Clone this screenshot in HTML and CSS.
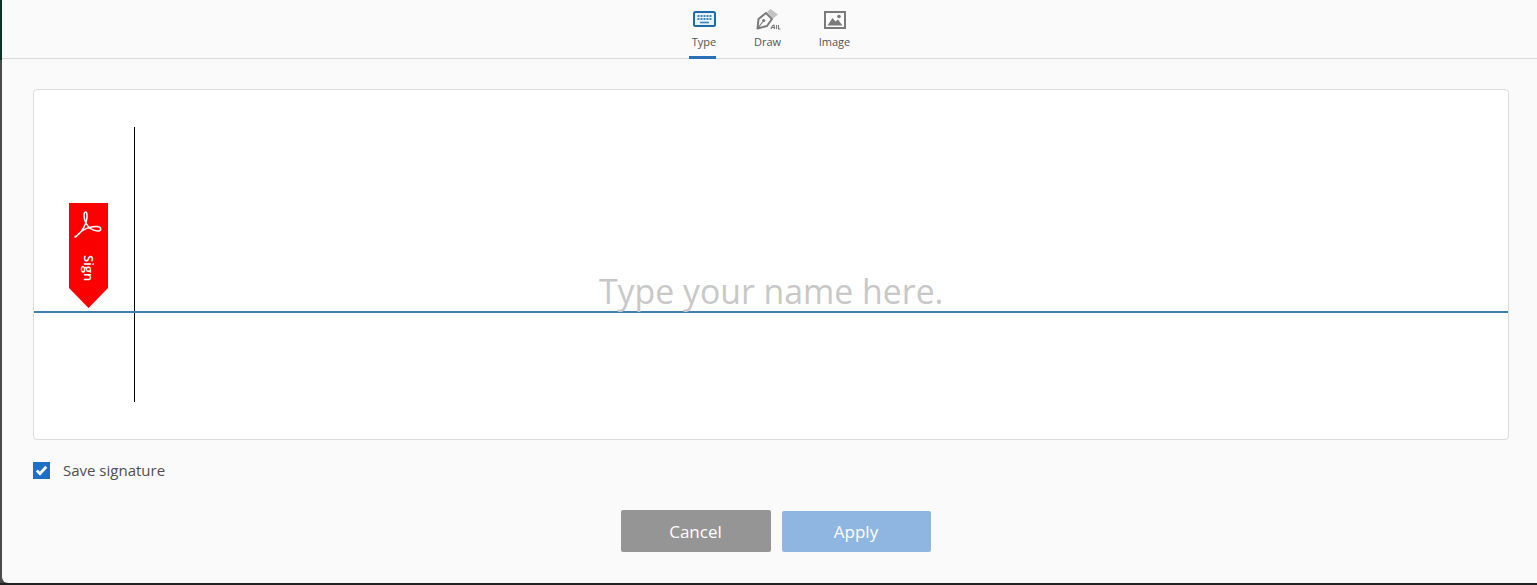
FILE: index.html
```html
<!DOCTYPE html>
<html lang="en">
<head>
<meta charset="utf-8">
<title>Sign</title>
<link rel="stylesheet" href="styles.css">
</head>
<body>
<div class="dialog">
  <nav class="tabs">
    <div class="tab tab-active">
      <svg class="tab-icon tab-icon-type" width="23" height="21" viewBox="0 0 23 21">
        <rect x="1" y="4" width="21" height="14" rx="1.500" fill="#eaf2f8" stroke="#1c6aa8" stroke-width="2"/>
        <path d="M4.500 8h14M4.500 11h14" stroke="#3d86bb" stroke-width="2" stroke-dasharray="2 1" fill="none"/>
        <path d="M7 14.500h9" stroke="#3d86bb" stroke-width="1.600" fill="none"/>
      </svg>
      <span class="tab-label tab-label-type">Type</span>
    </div>
    <div class="tab">
      <svg class="tab-icon" width="25" height="21" viewBox="0 0 25 21" overflow="visible">
        <path d="M2.500 20.500 L3.500 11 L11 5 L17 11 L12 18 Z" fill="none" stroke="#7a7a7a" stroke-width="2" stroke-linejoin="round"/>
        <path d="M2.500 20.500 L8 13.500" stroke="#7a7a7a" stroke-width="1.200"/>
        <circle cx="8.700" cy="12.500" r="1.600" fill="#7a7a7a"/>
        <path d="M12 4 L15.500 1 L23 6.500 L18 10.500 Z" fill="#c2c2c2"/>
        <path d="M16 21 C17 18 18 17 19 17 L19.500 21 M16.500 19.500 H20 M21.500 17 V21 M23.500 17 V21 H25.500" fill="none" stroke="#7a7a7a" stroke-width="1.100"/>
      </svg>
      <span class="tab-label">Draw</span>
    </div>
    <div class="tab">
      <svg class="tab-icon" width="22" height="21" viewBox="0 0 22 21">
        <rect x="1" y="4" width="20" height="16" fill="none" stroke="#7a7a7a" stroke-width="2"/>
        <path d="M3.500 17.500 L8.500 10 L11.500 13.500 L14 11.500 L18.500 17.500 Z" fill="#7a7a7a"/>
        <circle cx="15" cy="8.500" r="1.800" fill="#7a7a7a"/>
      </svg>
      <span class="tab-label">Image</span>
    </div>
  </nav>
  <main class="content">
    <section class="pad">
      <div class="flag">
        <svg class="flag-logo" width="30" height="28" viewBox="0 0 30 28">
          <path d="M2 26 C7 23 11 17 13 11.500 C14.500 7 14.500 1 12.500 1 C10.500 1 10.500 7 13 12 C15 16 19 19.500 24 20 C29 20.500 29 16 24 15.500 C18 15 10 18 6 22.500 C3.500 25.500 2 26.500 2 26 Z" fill="none" stroke="#fff" stroke-width="1.500"/>
        </svg>
        <span class="flag-text">Sign</span>
      </div>
      <div class="cursor-line"></div>
      <div class="baseline"></div>
      <div class="placeholder">Type your name here.</div>
    </section>
    <label class="save">
      <span class="check">
        <svg width="17" height="17" viewBox="0 0 17 17"><path d="M3.800 8.500 L7 11.800 L13.200 4.800" fill="none" stroke="#fff" stroke-width="2.800"/></svg>
      </span>
      <span class="save-text">Save signature</span>
    </label>
    <div class="actions">
      <button class="btn btn-cancel" type="button">Cancel</button>
      <button class="btn btn-apply" type="button">Apply</button>
    </div>
  </main>
</div>
</body>
</html>
```
FILE: styles.css
```css
html, body {
  margin: 0;
  height: 100%;
  overflow: hidden;
}

body {
  padding: 0 0 2px 2px;
  box-sizing: border-box;
  height: 585px;
  background: linear-gradient(to bottom, #12302a 0, #12302a 60px, #4a4a4a 60px, #4a4a4a 583px, #222 583px);
  font-family: "Open Sans", "Noto Sans", sans-serif;
}

.dialog {
  height: 583px;
  background: #fafafa;
  border-bottom-left-radius: 6px;
  display: flex;
  flex-direction: column;
}

.tabs {
  height: 58px;
  border-bottom: 1px solid #d8d8d8;
  display: flex;
  justify-content: center;
  padding-right: 2px;
}

.tab {
  width: 27px;
  height: 59px;
  display: flex;
  flex-direction: column;
  align-items: center;
  box-sizing: border-box;
}

.tab:nth-child(1) { margin-right: 25px; }
.tab:nth-child(2) { margin-left: 13px; margin-right: 26px; }
.tab:nth-child(3) { margin-left: 14px; }

.tab-active {
  border-bottom: 3px solid #2b6fb8;
}

.tab-icon {
  margin-top: 8px;
  flex: none;
}

.tab-icon-type,
.tab-label-type {
  margin-left: 3px;
}

.tab-label {
  margin-top: 5px;
  font-size: 11px;
  line-height: 16px;
  color: #555;
  white-space: nowrap;
}

.content {
  flex: 1;
  padding: 30px 28px 0 31px;
  display: flex;
  flex-direction: column;
}

.pad {
  height: 349px;
  background: #fff;
  border: 1px solid #dcdcdc;
  border-radius: 4px;
  position: relative;
  flex: none;
}

.flag {
  position: absolute;
  left: 35px;
  top: 113px;
  width: 39px;
  height: 105px;
  background: #fb0000;
  clip-path: polygon(0 0, 100% 0, 100% 81%, 50% 100%, 0 81%);
}

.flag-logo {
  position: absolute;
  left: 4px;
  top: 8px;
}

.flag-text {
  position: absolute;
  left: 0;
  top: 52px;
  width: 39px;
  height: 26px;
  display: flex;
  align-items: center;
  justify-content: center;
  writing-mode: vertical-rl;
  color: #fff;
  font-size: 13px;
  font-weight: 600;
  line-height: 39px;
}

.cursor-line {
  position: absolute;
  left: 100px;
  top: 37px;
  width: 1px;
  height: 275px;
  background: #000;
}

.baseline {
  position: absolute;
  left: 0;
  right: 0;
  top: 221px;
  height: 2px;
  background: #3f7fab;
}

.placeholder {
  position: absolute;
  left: 565px;
  top: 176px;
  font-size: 33.800px;
  line-height: 50px;
  font-weight: 400;
  color: #c8c8c8;
  white-space: nowrap;
}

.save {
  margin-top: 20px;
  display: flex;
  align-items: center;
  height: 20px;
}

.check {
  width: 17px;
  height: 17px;
  background: #1f6fc4;
  display: block;
  flex: none;
}

.check svg {
  display: block;
}

.save-text {
  margin-left: 13px;
  font-size: 15px;
  line-height: 20px;
  color: #505050;
}

.actions {
  margin-top: 30px;
  display: flex;
  justify-content: center;
  gap: 11px;
  padding-left: 9px;
}

.btn {
  width: 150px;
  height: 42px;
  border: 0;
  border-radius: 2px;
  color: #fff;
  font-family: inherit;
  font-size: 17px;
  padding: 0;
}

.btn-cancel {
  background: #959595;
}

.btn-apply {
  background: #8fb6e0;
  width: 149px;
  height: 41px;
  margin-top: 1px;
}
```
